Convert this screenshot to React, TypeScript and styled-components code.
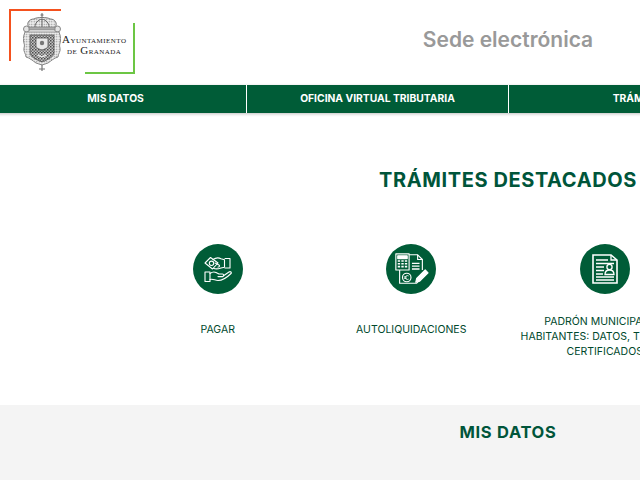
import React from "react";
import styled, { createGlobalStyle } from "styled-components";

const Global = createGlobalStyle`
  html, body { margin: 0; padding: 0; background: #fff; overflow: hidden; }
  body { font-family: "Inter", "Open Sans", sans-serif; }
`;

const Viewport = styled.div`
  width: 640px;
  height: 480px;
  overflow: hidden;
`;
const Page = styled.div`
  width: 1016px;
`;
const Header = styled.header`
  height: 85px;
  display: flex;
  align-items: flex-start;
  position: relative;
`;
const Logo = styled.a`
  display: flex;
  align-items: flex-start;
  width: 126px;
  height: 65px;
  margin: 9px 0 0 9px;
  position: relative;
  flex: none;
  &::before {
    content: "";
    position: absolute;
    left: 0;
    top: 0;
    width: 50px;
    height: 50px;
    border-top: 2px solid #f4511e;
    border-left: 2px solid #f4511e;
  }
  &::after {
    content: "";
    position: absolute;
    right: 0;
    bottom: 0;
    width: 48px;
    height: 49px;
    border-right: 2px solid #6cc644;
    border-bottom: 2px solid #6cc644;
  }
`;
const Emblem = styled.svg`
  width: 38px;
  height: 58px;
  margin: 4px 0 0 14px;
  flex: none;
`;
const LogoText = styled.div`
  margin: 25px 0 0 1px;
  font-family: "Liberation Serif", serif;
  font-size: 9.8px;
  line-height: 10px;
  letter-spacing: 0.45px;
  color: #222;
  text-align: center;
  white-space: nowrap;
  font-variant: small-caps;
  span { font-size: 11px; }
`;
const SiteTitle = styled.div`
  position: absolute;
  left: 0;
  right: 0;
  top: 28px;
  text-align: center;
  font-size: 21px;
  line-height: 24px;
  font-weight: 600;
  color: #999;
`;
const Nav = styled.nav`
  height: 28px;
  width: 1048px;
  margin-left: -15px;
  background: #005c37;
  display: flex;
  box-shadow: 0 1px 3px rgba(0, 0, 0, 0.25);
  position: relative;
`;
const NavItem = styled.a`
  width: 262px;
  box-sizing: border-box;
  flex: none;
  display: flex;
  align-items: center;
  justify-content: center;
  color: #fff;
  font-size: 10.3px;
  line-height: 26px;
  padding-bottom: 2px;
  font-weight: 700;
  border-right: 1px solid #fff;
  white-space: nowrap;
  &:last-child { border-right: 0; }
`;
const Featured = styled.section`
  height: 292px;
  padding-top: 55px;
  box-sizing: border-box;
  display: flex;
  flex-direction: column;
  align-items: center;
`;
const Heading = styled.h2`
  margin: 0;
  font-size: 20px;
  line-height: 24px;
  font-weight: 700;
  color: #00553a;
  letter-spacing: 0.6px;
`;
const Grid = styled.div`
  width: 774px;
  margin-top: 52px;
  display: grid;
  grid-template-columns: repeat(4, 1fr);
`;
const Card = styled.a`
  display: flex;
  flex-direction: column;
  align-items: center;
  text-align: center;
`;
const IconDisc = styled.div`
  width: 50px;
  height: 50px;
  border-radius: 50%;
  background: #005c37;
  display: flex;
  align-items: center;
  justify-content: center;
`;
const CardLabel = styled.div`
  margin-top: 20px;
  width: 170px;
  min-height: 30px;
  display: flex;
  align-items: center;
  justify-content: center;
  font-size: 10.5px;
  line-height: 15px;
  color: #00482c;
`;
const MyData = styled.section`
  height: 75px;
  background: #f4f4f4;
  padding-top: 16px;
  box-sizing: border-box;
  text-align: center;
`;
const SubHeading = styled.h2`
  margin: 0;
  font-size: 16.5px;
  line-height: 22px;
  font-weight: 700;
  color: #00553a;
  letter-spacing: 0.7px;
`;

const EmblemArt = () => (
  <Emblem viewBox="0 0 38 58" fill="none">
    <defs>
      <pattern id="chk" width="3" height="3" patternUnits="userSpaceOnUse">
        <rect width="3" height="3" fill="#c4c4c4" />
        <rect width="1.500" height="1.500" fill="#4a4a4a" />
        <rect x="1.500" y="1.500" width="1.500" height="1.500" fill="#6a6a6a" />
      </pattern>
      <pattern id="rim" width="2.500" height="2.500" patternUnits="userSpaceOnUse">
        <rect width="2.500" height="2.500" fill="#eee" />
        <circle cx="1.250" cy="1.250" r=".7" fill="#888" />
      </pattern>
    </defs>
    <path d="M19 0v5M17.500 2h3" stroke="#666" strokeWidth="1" />
    <path d="M6 15c-3-5 0-9 5-9 2-2 14-2 16 0 5 0 8 4 5 9z" fill="url(#rim)" stroke="#777" strokeWidth="1" />
    <path d="M12 14c0-4 3-7 7-8 4 1 7 4 7 8M19 6v8" stroke="#666" strokeWidth="1" />
    <circle cx="3.500" cy="16" r="3" fill="#e4e4e4" stroke="#888" />
    <circle cx="34.500" cy="16" r="3" fill="#e4e4e4" stroke="#888" />
    <path d="M6 14h26v3H6z" fill="#aaa" stroke="#777" strokeWidth=".6" />
    <path d="M2 19h34c1 3 2 5 1.500 9-.5 3-1.500 4-.5 7 1 3-2 6-2 9-4 1-7 4-10 6l-6 2-6-2c-3-2-6-5-10-6 0-3-3-6-2-9 1-3 0-4-.5-7C0 24 1 22 2 19z" fill="url(#rim)" stroke="#888" strokeWidth="1" />
    <path d="M7 22h24v18c0 4-7 7-12 9-5-2-12-5-12-9z" fill="url(#chk)" stroke="#555" strokeWidth=".8" />
    <path d="M13 25h12v8c0 2-3 3-6 4-3-1-6-2-6-4z" fill="#e8e8e8" stroke="#555" strokeWidth=".8" />
    <circle cx="19" cy="30" r="2.200" fill="#777" />
    <path d="M15 42c2 2 6 2 8 0" stroke="#eee" strokeWidth="1.200" />
    <path d="M19 52v6M16 56h6" stroke="#777" strokeWidth="1.200" />
  </Emblem>
);

const HandsIcon = () => (
  <svg width="32" height="28" viewBox="0 0 32 28" fill="none" stroke="#fff" strokeWidth="1.100" strokeLinejoin="round" strokeLinecap="round">
    <path d="M3 8 8.500 2.500 16 8l-5.500 6z" />
    <circle cx="9.500" cy="8.300" r="2.200" />
    <path d="M11 4.500c3-2 6-1.800 8-.8l3.500 1v7.500l-3.500.8c-2 .7-5 1.500-7.500.3" />
    <path d="M13 8l4 2c1 .7.500 2.300-1 2" />
    <path d="M23 3.500h5v9.500h-5" />
    <path d="M3 17h5v9.500H3z" />
    <path d="M8 18.500c2-1.500 4-2 6-1l3 1.500h3.500c1.500 0 1.500 2.300 0 2.600H16" />
    <path d="M8 24.500c3-1 5 1 8 1 4 0 9-3 13-7 1-1-.5-2.500-2-1.500l-5.500 3.800" />
  </svg>
);

const CalcIcon = () => (
  <svg width="36" height="36" viewBox="0 0 38 38" fill="none" stroke="#fff" strokeWidth="1.200" strokeLinejoin="round">
    <path d="M3 3h14v17H3z" />
    <path d="M5 5h10v3H5z" fill="#fff" />
    <path d="M5 10.500h2.500M8.800 10.500h2.500M12.500 10.500h2.500M5 13.500h2.500M8.800 13.500h2.500M12.500 13.500h2.500M5 16.500h2.500M8.800 16.500h2.500M12.500 16.500h2.500" strokeWidth="1.700" />
    <path d="M17 4h9l5 5v11" />
    <path d="M26 4v5h5" />
    <path d="M20 13h8M20 16h8M20 19h8" strokeWidth="1.400" />
    <path d="M7 20v14h18l3-3" />
    <circle cx="14.500" cy="28" r="4.500" />
    <path d="M16.500 26.300c-2-1-3.500.3-3.500 1.700s1.500 2.700 3.500 1.700M11.500 27.300h3M11.500 28.800h3" strokeWidth=".9" />
    <path d="M24 33l1-4 9-9 3 3-9 9z" fill="#fff" />
  </svg>
);

const DocIcon = () => (
  <svg width="30" height="34" viewBox="0 0 30 34" fill="none" stroke="#fff" strokeWidth="1.300" strokeLinejoin="miter">
    <path d="M3 3h18l6 5v23H3z" strokeWidth="1.600" />
    <path d="M21 3v5h6" />
    <path d="M6 8h12M6 11.500h18M6 15h8M6 18.500h8M6 22h7M6 25h18M6 28h18" strokeWidth="1.400" />
    <circle cx="19.500" cy="15" r="2.600" />
    <path d="M15 22.500c0-3.500 2-4.500 4.500-4.500s4.500 1 4.500 4.500z" />
  </svg>
);

export default function App() {
  return (
    <Viewport>
      <Global />
      <Page>
        <Header>
          <Logo>
            <EmblemArt />
            <LogoText>
              <div><span>A</span>yuntamiento</div>
              <div>de <span>G</span>ranada</div>
            </LogoText>
          </Logo>
          <SiteTitle>Sede electrónica</SiteTitle>
        </Header>
        <Nav>
          <NavItem>MIS DATOS</NavItem>
          <NavItem>OFICINA VIRTUAL TRIBUTARIA</NavItem>
          <NavItem>TRÁMITES</NavItem>
          <NavItem>CONTACTO</NavItem>
        </Nav>
        <Featured>
          <Heading>TRÁMITES DESTACADOS</Heading>
          <Grid>
            <Card>
              <IconDisc><HandsIcon /></IconDisc>
              <CardLabel>PAGAR</CardLabel>
            </Card>
            <Card>
              <IconDisc><CalcIcon /></IconDisc>
              <CardLabel>AUTOLIQUIDACIONES</CardLabel>
            </Card>
            <Card>
              <IconDisc><DocIcon /></IconDisc>
              <CardLabel>PADRÓN MUNICIPAL DE HABITANTES: DATOS, TRÁMITES, CERTIFICADOS</CardLabel>
            </Card>
          </Grid>
        </Featured>
        <MyData>
          <SubHeading>MIS DATOS</SubHeading>
        </MyData>
      </Page>
    </Viewport>
  );
}
